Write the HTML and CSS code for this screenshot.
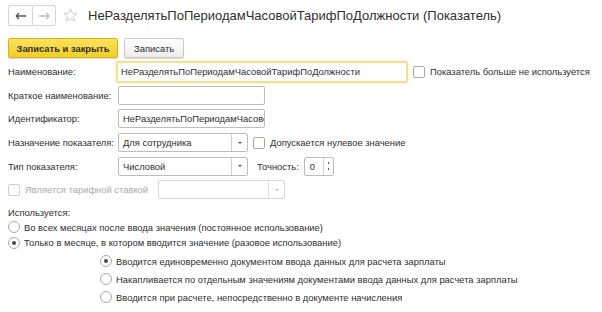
FILE: index.html
```html
<!DOCTYPE html>
<html>
<head>
<meta charset="utf-8">
<link rel="stylesheet" href="styles.css">
</head>
<body>
<div class="page">
  <div class="header">
    <div class="nav">
      <button class="nav-btn"><svg width="12" height="8" viewBox="0 0 12 8"><path d="M1 4h10M1 4l3-3M1 4l3 3" stroke="#555" stroke-width="1.3" fill="none"/></svg></button>
      <button class="nav-btn"><svg width="12" height="8" viewBox="0 0 12 8"><path d="M1 4h10M11 4l-3-3M11 4l-3 3" stroke="#bbb" stroke-width="1.3" fill="none"/></svg></button>
    </div>
    <svg class="star" width="15" height="15" viewBox="0 0 16 16"><path d="M8 1.2l2 4.3 4.6.5-3.4 3.1 1 4.6L8 11.4l-4.2 2.3 1-4.6L1.4 6l4.6-.5z" fill="none" stroke="#c8c8c8" stroke-width="1"/></svg>
    <h1 class="title">НеРазделятьПоПериодамЧасовойТарифПоДолжности (Показатель)</h1>
  </div>
  <div class="toolbar">
    <button class="btn btn-primary">Записать и закрыть</button>
    <button class="btn">Записать</button>
  </div>
  <div class="form">
    <div class="row">
      <span class="label">Наименование:</span>
      <div class="input input-wide focused">НеРазделятьПоПериодамЧасовойТарифПоДолжности</div>
      <label class="check"><span class="box"></span>Показатель больше не используется</label>
    </div>
    <div class="row">
      <span class="label">Краткое наименование:</span>
      <div class="input input-mid"></div>
    </div>
    <div class="row">
      <span class="label">Идентификатор:</span>
      <div class="input input-mid clip">НеРазделятьПоПериодамЧасовойТарифПоДолжности</div>
    </div>
    <div class="row">
      <span class="label">Назначение показателя:</span>
      <div class="combo"><span class="combo-text">Для сотрудника</span><span class="combo-btn"><i class="tri"></i></span></div>
      <label class="check check-gap"><span class="box"></span>Допускается нулевое значение</label>
    </div>
    <div class="row">
      <span class="label">Тип показателя:</span>
      <div class="combo"><span class="combo-text">Числовой</span><span class="combo-btn"><i class="tri"></i></span></div>
      <span class="label-inline">Точность:</span>
      <div class="spin"><span class="spin-val">0</span><span class="spin-btns"><i></i><i></i></span></div>
    </div>
    <div class="row">
      <label class="check disabled"><span class="box"></span>Является тарифной ставкой</label>
      <div class="combo combo-disabled"><span class="combo-text"></span><span class="combo-btn"><i class="tri"></i></span></div>
    </div>
    <div class="group-title">Используется:</div>
    <label class="radio"><span class="dot"></span>Во всех месяцах после ввода значения (постоянное использование)</label>
    <label class="radio"><span class="dot on"></span>Только в месяце, в котором вводится значение (разовое использование)</label>
    <div class="sub">
      <label class="radio"><span class="dot on"></span>Вводится единовременно документом ввода данных для расчета зарплаты</label>
      <label class="radio"><span class="dot"></span>Накапливается по отдельным значениям документами ввода данных для расчета зарплаты</label>
      <label class="radio"><span class="dot"></span>Вводится при расчете, непосредственно в документе начисления</label>
    </div>
  </div>
</div>
</body>
</html>
```
FILE: styles.css
```css
* { box-sizing: border-box; }
html, body { margin: 0; padding: 0; background: #fff; }
body { font-family: "Liberation Sans", Arial, sans-serif; font-size: 9.4px; color: #2f2f2f; }
.page { padding: 5px 8px 0 8px; }
.header { display: flex; align-items: center; height: 21px; }
.nav { display: flex; }
.nav-btn { width: 24px; height: 21px; border: 1px solid #d6d6d6; background: #fff; padding: 0; display: flex; align-items: center; justify-content: center; }
.nav-btn:first-child { border-radius: 2px 0 0 2px; border-right: none; }
.nav-btn:last-child { border-radius: 0 2px 2px 0; }
.star { margin-left: 7px; margin-right: 10px; }
.title { font-size: 13px; font-weight: normal; margin: 0; color: #2f2f2f; white-space: nowrap; }
.toolbar { display: flex; gap: 6px; margin-top: 12px; }
.btn { height: 20px; border: 1px solid #c8c8c8; border-radius: 2px; background: linear-gradient(#fff, #ededed); font: 9.4px "Liberation Sans", Arial, sans-serif; color: #2f2f2f; padding: 0 9px; box-shadow: 0 1px 1px rgba(0,0,0,.15); white-space: nowrap; }
.btn-primary { background: linear-gradient(#fbe35a, #f2cf21); border-color: #d8b70a; font-weight: bold; width: 110px; padding: 0; }
.form { margin-top: 2px; }
.row { display: flex; align-items: center; height: 23.6px; white-space: nowrap; }
.label { width: 110px; flex: none; white-space: nowrap; }
.input { height: 19px; border: 1px solid #bdbdbd; border-radius: 2px; padding: 0 4px; line-height: 17px; white-space: nowrap; overflow: hidden; flex: none; }
.input-wide { width: 292px; margin-left: -2px; height: 22px; line-height: 18px; padding-left: 3px; }
.focused { border: 2px solid #f3e18d; box-shadow: 0 0 2px #f3e18d; }
.input-mid { width: 147px; }
.clip { text-overflow: clip; }
.check { display: flex; align-items: center; white-space: nowrap; }
.row .check:nth-child(3) { margin-left: 5px; }
.check-gap { margin-left: 8px; }
.box { width: 12px; height: 12px; border: 1px solid #a9a9a9; border-radius: 2px; margin-right: 5px; background: #fff; flex: none; }
.combo { display: flex; width: 130px; height: 19px; border: 1px solid #bdbdbd; border-radius: 2px; flex: none; }
.combo-text { flex: 1; padding: 0 4px; line-height: 17px; }
.combo-btn { width: 16px; border-left: 1px solid #d0d0d0; display: flex; align-items: center; justify-content: center; }
.tri { width: 0; height: 0; border-left: 2px solid transparent; border-right: 2px solid transparent; border-top: 2px solid #555; }
.label-inline { margin-left: 9px; margin-right: 5px; }
.spin { display: flex; width: 30px; height: 19px; border: 1px solid #bdbdbd; border-radius: 2px; flex: none; }
.spin-val { flex: 1; padding-left: 5px; line-height: 17px; }
.spin-btns { width: 10px; border-left: 1px solid #d0d0d0; display: flex; flex-direction: column; align-items: center; justify-content: center; gap: 4px; }
.spin-btns i { width: 1px; height: 2px; background: #555; }
.disabled { color: #aaa; }
.disabled .box { border-color: #d0d0d0; }
.combo-disabled { width: 127px; margin-left: 10px; border-color: #d8d8d8; }
.combo-disabled .combo-btn { border-left-color: #e2e2e2; }
.combo-disabled .tri { border-top-color: #bbb; }
.group-title { margin-top: 4px; height: 14px; line-height: 14px; }
.radio { display: flex; align-items: center; height: 15.5px; white-space: nowrap; }
.dot { width: 12px; height: 12px; border: 1px solid #a9a9a9; border-radius: 50%; margin-right: 4px; display: flex; align-items: center; justify-content: center; flex: none; }
.dot.on::after { content: ""; width: 4px; height: 4px; border-radius: 50%; background: #4a4a4a; }
.sub { padding-left: 92px; margin-top: 3px; display: flex; flex-direction: column; gap: 2.5px; }
```
